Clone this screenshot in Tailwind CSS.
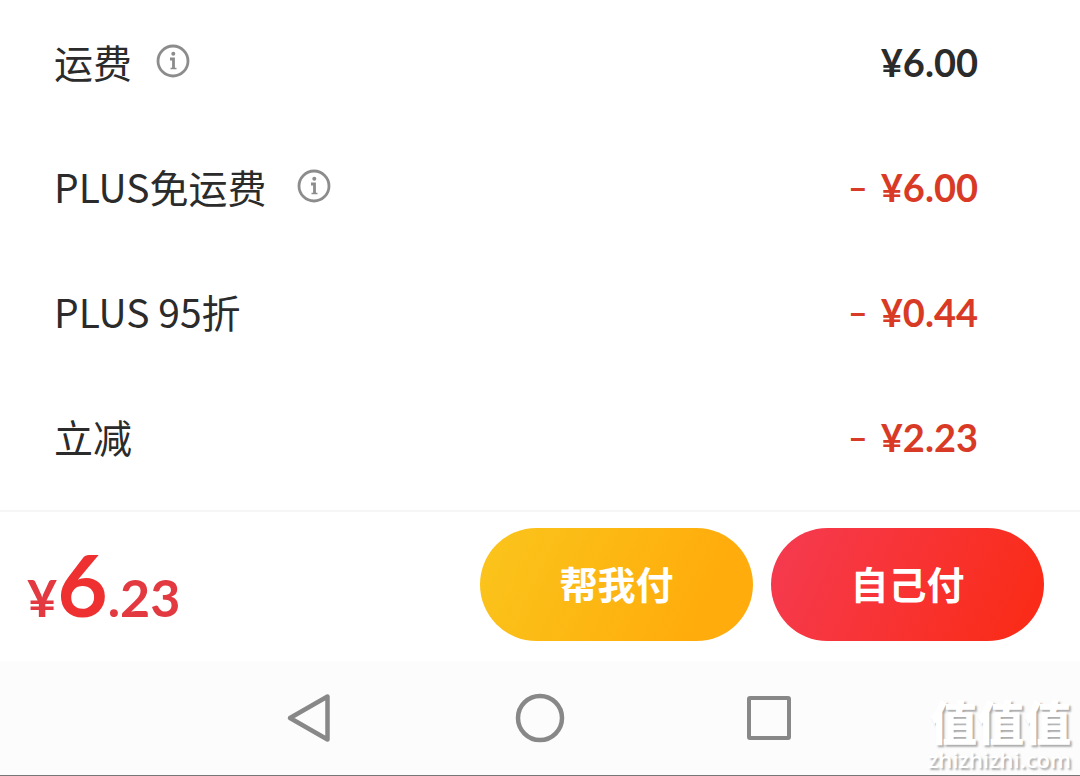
<!DOCTYPE html>
<html lang="zh-CN">
<head>
<meta charset="utf-8">
<meta name="viewport" content="width=device-width, initial-scale=1">
<title>确认订单</title>
<script src="https://cdn.jsdelivr.net/npm/@tailwindcss/browser@4"></script>
</head>
<body class="bg-white font-['Noto_Sans_CJK_SC',sans-serif] text-[#2b2b2b]">
<div class="relative flex min-h-screen flex-col">
  <dl class="border-b-2 border-[#f6f6f6] pb-[10px] pl-[54px] pr-[102px] text-[38px] leading-[56px]">
    <div class="flex h-[125px] items-center justify-between">
      <dt class="flex items-center gap-[23px] pb-1 text-[39px]">运费
        <button type="button" aria-label="运费说明">
          <svg class="block size-[36px]" viewBox="0 0 36 36" fill="none" stroke="#8c8c8c"><circle cx="18" cy="18" r="15" stroke-width="2.800"/><path d="M15 16h3.500v9.500" stroke-width="2.800"/><path d="M15.500 25.500h6" stroke-width="1.500"/><circle cx="18.300" cy="10.800" r="2" fill="#8c8c8c" stroke="none"/></svg>
        </button>
      </dt>
      <dd class="pb-0.5 font-['Lato',sans-serif] font-bold">¥6.00</dd>
    </div>
    <div class="flex h-[125px] items-center justify-between">
      <dt class="flex items-center gap-[29px] pb-1 text-[39px]">PLUS免运费
        <button type="button" aria-label="PLUS免运费说明">
          <svg class="block size-[36px]" viewBox="0 0 36 36" fill="none" stroke="#8c8c8c"><circle cx="18" cy="18" r="15" stroke-width="2.800"/><path d="M15 16h3.500v9.500" stroke-width="2.800"/><path d="M15.500 25.500h6" stroke-width="1.500"/><circle cx="18.300" cy="10.800" r="2" fill="#8c8c8c" stroke="none"/></svg>
        </button>
      </dt>
      <dd class="flex items-center gap-[13px] pb-0.5 font-['Lato',sans-serif] font-bold text-[#d93a26]"><span class="text-[34px]">–</span><span>¥6.00</span></dd>
    </div>
    <div class="flex h-[125px] items-center justify-between">
      <dt class="pb-1 text-[39px]">PLUS 95折</dt>
      <dd class="flex items-center gap-[13px] pb-0.5 font-['Lato',sans-serif] font-bold text-[#d93a26]"><span class="text-[34px]">–</span><span>¥0.44</span></dd>
    </div>
    <div class="flex h-[125px] items-center justify-between">
      <dt class="pb-1 text-[39px]">立减</dt>
      <dd class="flex items-center gap-[13px] pb-0.5 font-['Lato',sans-serif] font-bold text-[#d93a26]"><span class="text-[34px]">–</span><span>¥2.23</span></dd>
    </div>
  </dl>

  <div class="flex items-center justify-between pb-[20px] pl-[27px] pr-[36px] pt-[16px]">
    <p class="pt-[12px] font-['Lato',sans-serif] text-[52px] font-bold leading-[80px] text-[#e23a40]">¥<span class="text-[87px] text-[#ee3030]">6</span>.23</p>
    <div class="flex gap-[18px] text-[38px] font-bold text-white">
      <button type="button" class="h-[113px] w-[273px] rounded-full bg-[linear-gradient(115deg,#fac51c,#ffac0c_80%)] pb-1">帮我付</button>
      <button type="button" class="h-[113px] w-[273px] rounded-full bg-[linear-gradient(115deg,#f53b52,#fa2c19_90%)] pb-1">自己付</button>
    </div>
  </div>

  <nav class="flex grow items-center justify-center border-b border-[#777] bg-[#fcfcfc]" aria-label="系统导航">
    <button type="button" class="flex w-[230px] justify-center" aria-label="返回">
      <svg class="size-[50px]" viewBox="0 0 50 50" fill="none" stroke="#888" stroke-width="4.500" stroke-linejoin="round"><path d="M5 25 42.500 3.500v43z"/></svg>
    </button>
    <button type="button" class="flex w-[230px] justify-center" aria-label="主页">
      <svg class="size-[50px]" viewBox="0 0 50 50" fill="none" stroke="#888" stroke-width="4.500"><circle cx="25" cy="25" r="22"/></svg>
    </button>
    <button type="button" class="flex w-[230px] justify-center" aria-label="最近任务">
      <svg class="size-[50px]" viewBox="0 0 50 50" fill="none" stroke="#888" stroke-width="4" stroke-linejoin="round"><rect x="4" y="5" width="40" height="40" rx="1"/></svg>
    </button>
  </nav>

  <div class="absolute bottom-[5px] right-[9px] text-right text-white [text-shadow:2px_2px_2px_#aaa]">
    <p class="text-[47px] font-black leading-[54px]">值值值</p>
    <p class="font-['Open_Sans',sans-serif] text-[22px] font-semibold leading-[24px]">zhizhizhi.com</p>
  </div>
</div>
</body>
</html>
